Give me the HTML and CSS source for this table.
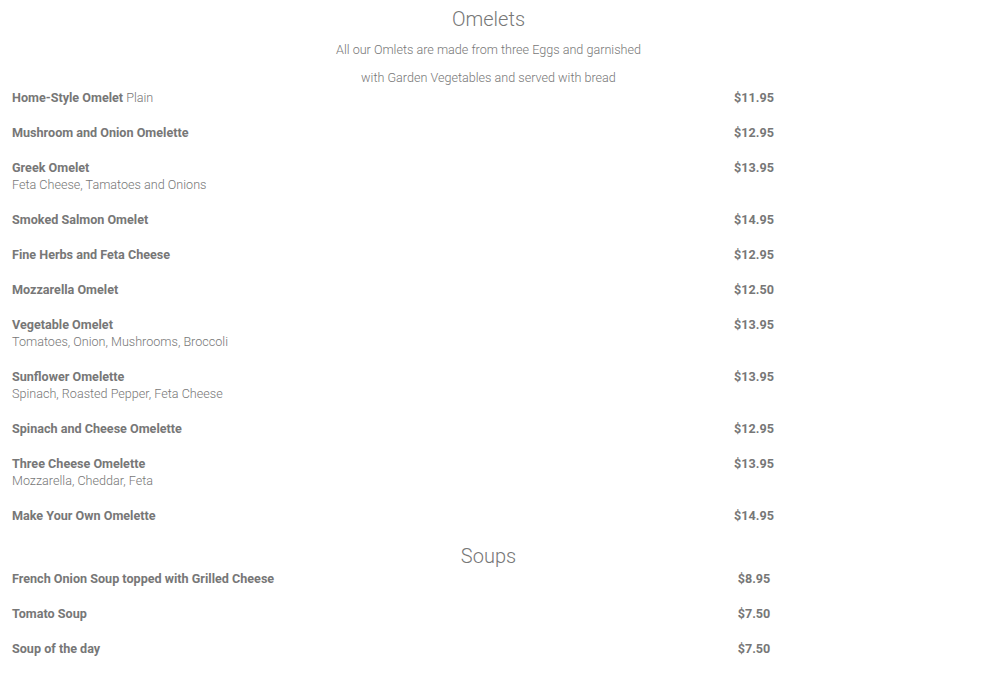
FILE: index.html
```html
<!DOCTYPE html>
<html lang="en">
<head>
    <meta charset="UTF-8">
    <meta name="viewport" content="width=device-width, initial-scale=1.0">
    <title>Menu</title>
    <link rel="stylesheet" href="styles.css">
</head>
<body>
<main class="menu">
    <section class="menu-section">
        <h2>Omelets</h2>
        <p class="intro">All our Omlets are made from three Eggs and garnished<br>with Garden Vegetables and served with bread</p>
        <div class="item">
            <div class="name"><b>Home-Style Omelet</b> Plain</div>
            <div class="price">$11.95</div>
        </div>
        <div class="item">
            <div class="name"><b>Mushroom and Onion Omelette</b></div>
            <div class="price">$12.95</div>
        </div>
        <div class="item">
            <div class="name"><b>Greek Omelet</b><br>Feta Cheese, Tamatoes and Onions</div>
            <div class="price">$13.95</div>
        </div>
        <div class="item">
            <div class="name"><b>Smoked Salmon Omelet</b></div>
            <div class="price">$14.95</div>
        </div>
        <div class="item">
            <div class="name"><b>Fine Herbs and Feta Cheese</b></div>
            <div class="price">$12.95</div>
        </div>
        <div class="item">
            <div class="name"><b>Mozzarella Omelet</b></div>
            <div class="price">$12.50</div>
        </div>
        <div class="item">
            <div class="name"><b>Vegetable Omelet</b><br>Tomatoes, Onion, Mushrooms, Broccoli</div>
            <div class="price">$13.95</div>
        </div>
        <div class="item">
            <div class="name"><b>Sunflower Omelette</b><br>Spinach, Roasted Pepper, Feta Cheese</div>
            <div class="price">$13.95</div>
        </div>
        <div class="item">
            <div class="name"><b>Spinach and Cheese Omelette</b></div>
            <div class="price">$12.95</div>
        </div>
        <div class="item">
            <div class="name"><b>Three Cheese Omelette</b><br>Mozzarella, Cheddar, Feta</div>
            <div class="price">$13.95</div>
        </div>
        <div class="item">
            <div class="name"><b>Make Your Own Omelette</b></div>
            <div class="price">$14.95</div>
        </div>
    </section>
    <section class="menu-section">
        <h2>Soups</h2>
        <div class="item">
            <div class="name"><b>French Onion Soup topped with Grilled Cheese</b></div>
            <div class="price">$8.95</div>
        </div>
        <div class="item">
            <div class="name"><b>Tomato Soup</b></div>
            <div class="price">$7.50</div>
        </div>
        <div class="item">
            <div class="name"><b>Soup of the day</b></div>
            <div class="price">$7.50</div>
        </div>
    </section>
</main>
</body>
</html>
```

FILE: styles.css
```css
body, html {
    margin: 0;
    padding: 0;
    font-family: Roboto, "Liberation Sans", sans-serif;
    color: #777;
    background: #fff;
}

.menu {
    padding: 5px 0 0 12px;
    width: 953px;
}

.menu-section h2 {
    margin: 0;
    font-size: 20px;
    font-weight: 300;
    line-height: 28px;
    text-align: center;
}

.intro {
    margin: 3px 0 -3px;
    font-size: 12.6px;
    font-weight: 300;
    line-height: 28px;
    text-align: center;
}

.item {
    display: grid;
    grid-template-columns: 702px 80px;
    padding-bottom: 18px;
    font-size: 12.6px;
    line-height: 17px;
}

.name {
    font-weight: 300;
}

.name b {
    font-weight: 700;
}

.price {
    font-weight: 700;
    text-align: center;
}
```
